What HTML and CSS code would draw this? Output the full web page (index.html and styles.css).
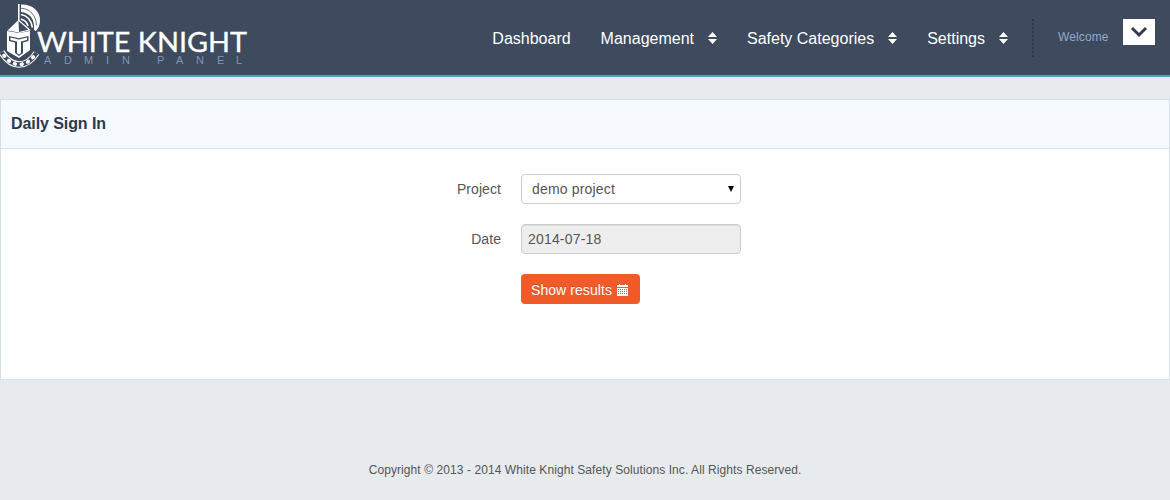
FILE: index.html
```html
<!DOCTYPE html>
<html lang="en">
<head>
<meta charset="utf-8">
<title>Daily Sign In</title>
<link rel="stylesheet" href="styles.css">
</head>
<body>
<header class="header">
  <svg class="logo" width="250" height="75" viewBox="0 0 250 75" role="img" aria-label="White Knight Admin Panel">
    <path d="M18 4h1.600v17H18z" fill="#fff"/>
    <path d="M21 4.500C32 4 40 11 40 20c0 4-1 8-4 11l-2-1c1-11-4-17-13-18z" fill="#fff"/>
    <path d="M21 8.200c9 .5 15 7 15.500 17" fill="none" stroke="#3e4a5d" stroke-width=".8"/>
    <path d="M21 14.500c6 1 10 5 11.500 13M21 19c3.500 1 6 3 7 7" fill="none" stroke="#fff" stroke-width="1.700"/>
    <path d="M18.500 20L7.500 30.500l11.500 2z" fill="#fff"/>
    <path d="M19 20.500l10.500 9.500-10.500 2.500" fill="none" stroke="#fff" stroke-width="1.200"/>
    <path d="M7 31l12 2 11-2v19l-11 8-12-7z" fill="#fff"/>
    <path d="M9 36l10 2.200L28.500 36v5L23 42.500V53l-4 3-4-3V42.500L9 41z" fill="#3e4a5d"/>
    <path d="M10.500 37.600l8.500 2 8-2v2.400l-6 1.600V53L19 54.500 17 53V41.600l-6.500-1.600z" fill="#fff"/>
    <path d="M1.500 52C6 59.500 12 64.500 19 64.500S32 60 36.500 53" fill="none" stroke="#fff" stroke-width="6.500"/>
    <path d="M1.500 52C6 59.500 12 64.500 19 64.500S32 60 36.500 53" fill="none" stroke="#3e4a5d" stroke-width="4.300"/>
    <path d="M4 55.500C8 60.500 12 64.500 19 64.500S31 60 35.500 54.500" fill="none" stroke="#fff" stroke-width="3.600" stroke-linecap="round" stroke-dasharray=".8 6"/>
    <text class="logo-name" x="37" y="52" textLength="210" lengthAdjust="spacingAndGlyphs">WHITE KNIGHT</text>
    <text class="logo-sub" y="64" x="44 64 84 106 122 139 157 176 196 217 236">ADMIN PANEL</text>
  </svg>
  <nav class="nav">
    <a class="nav-item"><span>Dashboard</span></a>
    <a class="nav-item"><span>Management</span><svg class="sort" width="9" height="12" viewBox="0 0 9 12"><path d="M0 5l4.500-5L9 5zM0 7h9l-4.500 5z"/></svg></a>
    <a class="nav-item"><span>Safety Categories</span><svg class="sort" width="9" height="12" viewBox="0 0 9 12"><path d="M0 5l4.500-5L9 5zM0 7h9l-4.500 5z"/></svg></a>
    <a class="nav-item"><span>Settings</span><svg class="sort" width="9" height="12" viewBox="0 0 9 12"><path d="M0 5l4.500-5L9 5zM0 7h9l-4.500 5z"/></svg></a>
  </nav>
  <svg class="divider" width="2" height="38" viewBox="0 0 2 38"><path d="M1 0v38" stroke="#2b384b" stroke-width="2" stroke-dasharray="2"/></svg>
  <span class="welcome">Welcome</span>
  <button class="user-menu" aria-label="User menu"><svg width="18" height="12" viewBox="0 0 18 12"><path d="M2 2l7 7 7-7" fill="none" stroke="#343d4b" stroke-width="3"/></svg></button>
</header>
<main class="panel">
  <h1 class="panel-title">Daily Sign In</h1>
  <form class="form">
    <label class="label" for="project">Project</label>
    <div class="field select" id="project"><span>demo project</span><svg width="6" height="6" viewBox="0 0 6 6"><path d="M0 0h6L3 6z"/></svg></div>
    <label class="label" for="date">Date</label>
    <input class="field date" id="date" value="2014-07-18" readonly>
    <button class="submit" type="button">Show results<svg width="11" height="12" viewBox="0 0 11 12" shape-rendering="crispEdges"><path fill="#fff" d="M0 1h2V0h1v1h5V0h1v1h2v2H0zM0 4h11v8H0z"/><path fill="none" stroke="#f15a29" stroke-width="1" stroke-dasharray="1 1" d="M1 5.500h9M1 7.500h9M1 9.500h9"/></svg></button>
  </form>
</main>
<footer class="footer">Copyright © 2013 - 2014 White Knight Safety Solutions Inc. All Rights Reserved.</footer>
</body>
</html>
```
FILE: styles.css
```css
* { box-sizing: border-box; }
body { margin: 0; height: 500px; overflow: hidden; background: #e7ebee; color: #555; font: 14px/20px "Liberation Sans", Arial, sans-serif; }
.header { display: flex; align-items: flex-start; height: 77px; padding-right: 15px; background: #3e4a5d; border-bottom: 2px solid #49a3c5; }
.logo { flex: none; }
.logo-name { fill: #fff; font: 26px Lato, sans-serif; stroke: #fff; stroke-width: .3px; }
.logo-sub { fill: #8094b8; font: 11px "Liberation Sans", Arial, sans-serif; }
.nav { display: flex; gap: 30px; margin: 28px 24px 0 auto; }
.nav-item { display: flex; align-items: center; color: #fff; font-size: 16px; line-height: 20px; white-space: nowrap; }
.nav-item span { padding-top: 1px; margin-bottom: -1px; }
.sort { margin-left: 14px; fill: #fff; }
.divider { margin: 19px 24px 0 0; }
.welcome { width: 65px; margin-top: 27px; color: #94a9c9; font-size: 12px; letter-spacing: .12px; }
.user-menu { display: flex; align-items: center; justify-content: center; width: 32px; height: 26px; margin-top: 19px; padding: 0; border: 0; background: #fff; }
.panel { height: 281px; margin-top: 22px; background: #fff; border: 1px solid #d5dfea; }
.panel-title { height: 49px; margin: 0; padding: 0 10px; border-bottom: 1px solid #d5dfea; background: #f6f9fe; color: #2b3a4b; font-size: 16px; line-height: 48px; letter-spacing: -.08px; }
.form { display: grid; grid-template-columns: 500px 220px; column-gap: 20px; row-gap: 20px; padding-top: 25px; }
.label { text-align: right; line-height: 30px; letter-spacing: .07px; }
.field { width: 220px; height: 30px; border: 1px solid #ccc; border-radius: 4px; color: #555; font: inherit; letter-spacing: .18px; }
.select { display: flex; align-items: center; justify-content: space-between; padding: 0 6px 0 10px; background: #fff; }
.date { padding: 4px 6px; background: #eee; box-shadow: inset 0 1px 1px rgba(0, 0, 0, .075); }
.submit { display: flex; grid-column: 2; align-items: center; gap: 5px; width: 119px; height: 30px; padding: 2px 10px 0; border: 0; border-radius: 4px; background: #f15a29; color: #fff; font: inherit; letter-spacing: .07px; white-space: nowrap; text-shadow: 0 -1px 0 rgba(0, 0, 0, .15); }
.footer { margin-top: 80px; font-size: 12px; letter-spacing: .08px; text-align: center; }
```
